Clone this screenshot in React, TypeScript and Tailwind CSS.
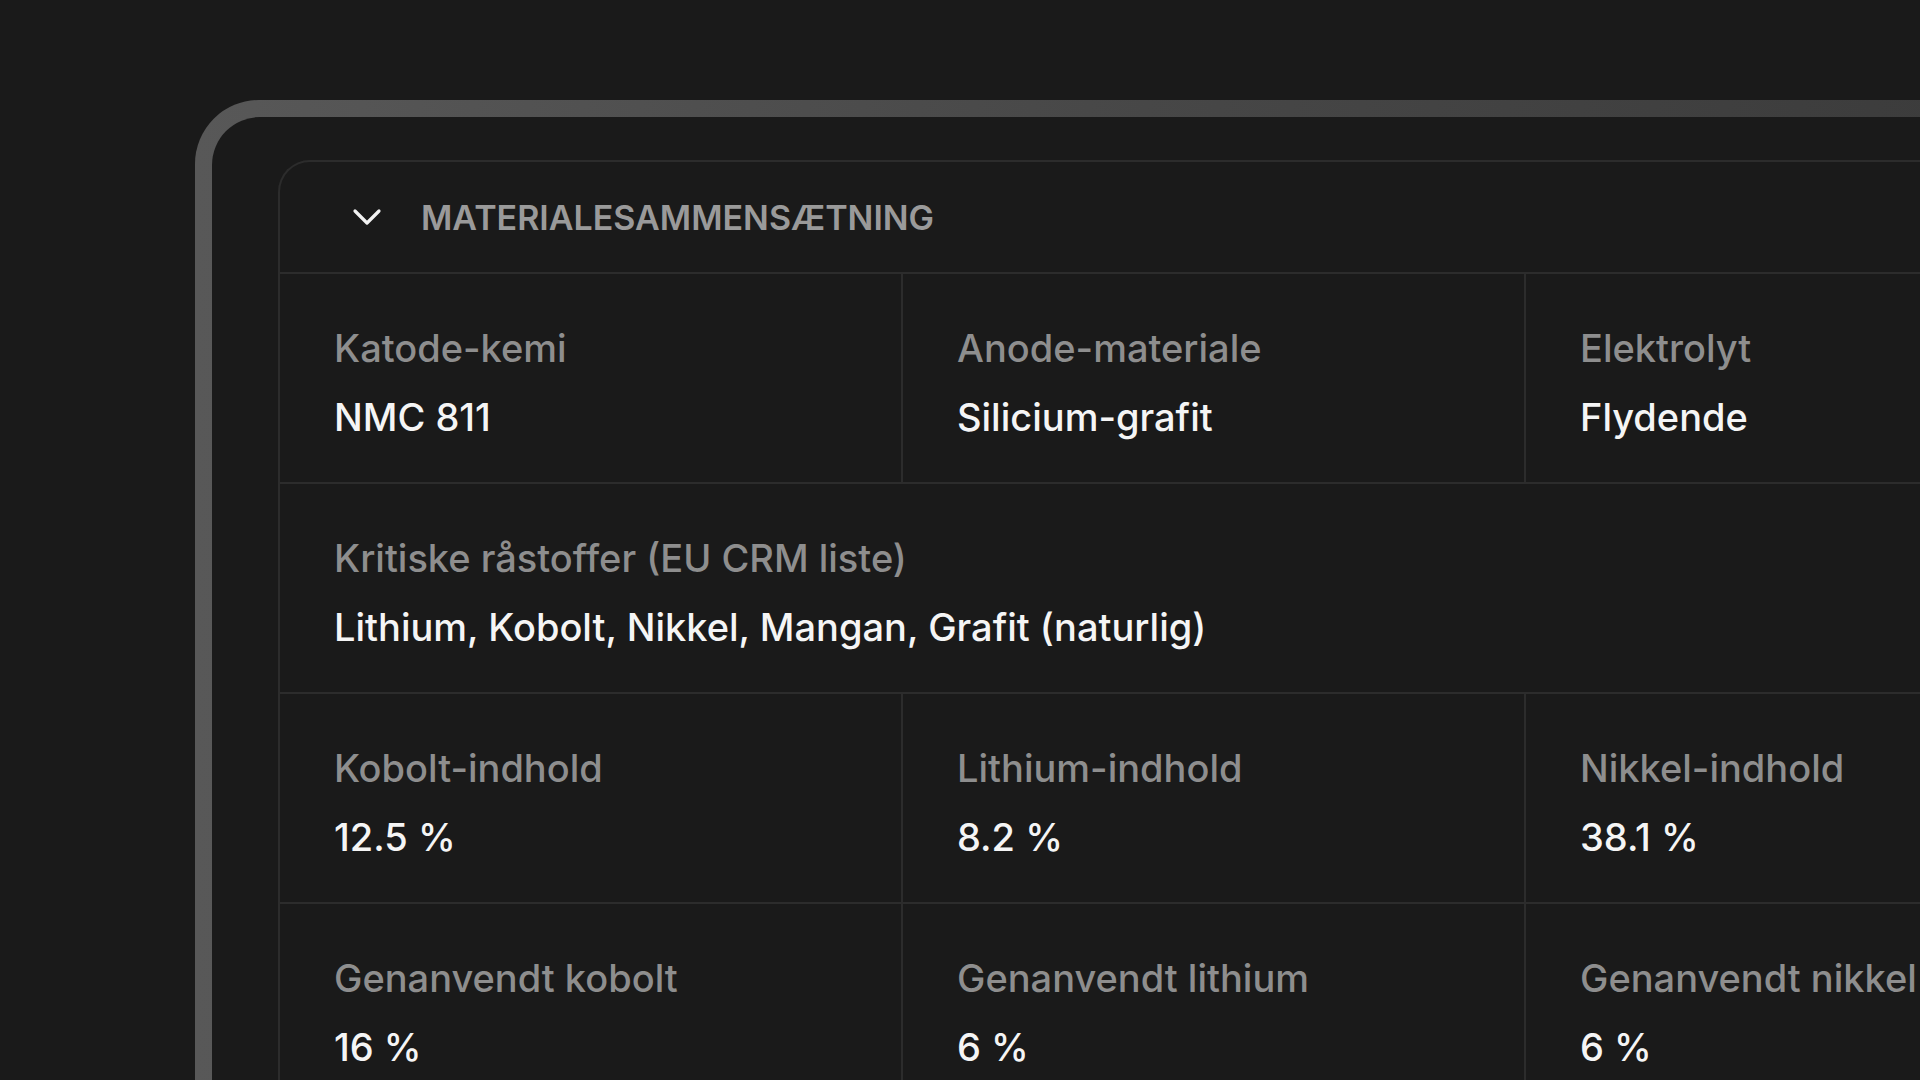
import React from 'react';

interface Field {
  label: string;
  value: string;
  wide?: boolean;
}

const fields: Field[] = [
  { label: 'Katode-kemi', value: 'NMC 811' },
  { label: 'Anode-materiale', value: 'Silicium-grafit' },
  { label: 'Elektrolyt', value: 'Flydende' },
  { label: 'Kritiske råstoffer (EU CRM liste)', value: 'Lithium, Kobolt, Nikkel, Mangan, Grafit (naturlig)', wide: true },
  { label: 'Kobolt-indhold', value: '12.5 %' },
  { label: 'Lithium-indhold', value: '8.2 %' },
  { label: 'Nikkel-indhold', value: '38.1 %' },
  { label: 'Genanvendt kobolt', value: '16 %' },
  { label: 'Genanvendt lithium', value: '6 %' },
  { label: 'Genanvendt nikkel', value: '6 %' },
];

function Chevron() {
  return (
    <svg width="48" height="48" viewBox="0 0 24 24" fill="none" stroke="#f2f2f2" strokeWidth="1.6" strokeLinecap="round" strokeLinejoin="round">
      <path d="m6 9 6 6 6-6" />
    </svg>
  );
}

export default function App() {
  return (
    <div className="h-screen w-full overflow-hidden bg-[#1a1a1a] pl-[195px] pt-[100px] font-['Inter','Liberation_Sans',sans-serif]">
      {/* device frame */}
      <div className="w-[1900px] h-[1100px] rounded-tl-[64px] bg-gradient-to-r from-[#585858] via-[#474747] to-[#3a3a3a] pl-[17px] pt-[17px]">
        <div className="h-full w-full rounded-tl-[48px] bg-[#1a1a1a] pl-[66px] pt-[43px]">
          <div className="w-[1900px] rounded-tl-[32px] border-l-2 border-t-2 border-[#2c2c2c] bg-[#1a1a1a]">
            {/* header */}
            <div className="flex h-[112px] items-center gap-[30px] border-b-2 border-[#2c2c2c] pl-[63px]">
              <Chevron />
              <span className="text-[34px] font-semibold uppercase text-[#9a9a9a]">Materialesammensætning</span>
            </div>

            <div className="grid grid-cols-[623px_623px_623px]">
              {fields.map((f) => (
                <div
                  key={f.label}
                  className={`border-b-2 border-r-2 border-[#2c2c2c] pl-[54px] pt-[52px] pb-[43px] ${f.wide ? 'col-span-3' : ''}`}
                >
                  <div className="text-[38px] font-medium leading-[44px] text-[#8e8e8e]">{f.label}</div>
                  <div className="mt-[25px] text-[38px] font-medium leading-[44px] text-[#f5f5f5]">{f.value}</div>
                </div>
              ))}
            </div>
          </div>
        </div>
      </div>
    </div>
  );
}
